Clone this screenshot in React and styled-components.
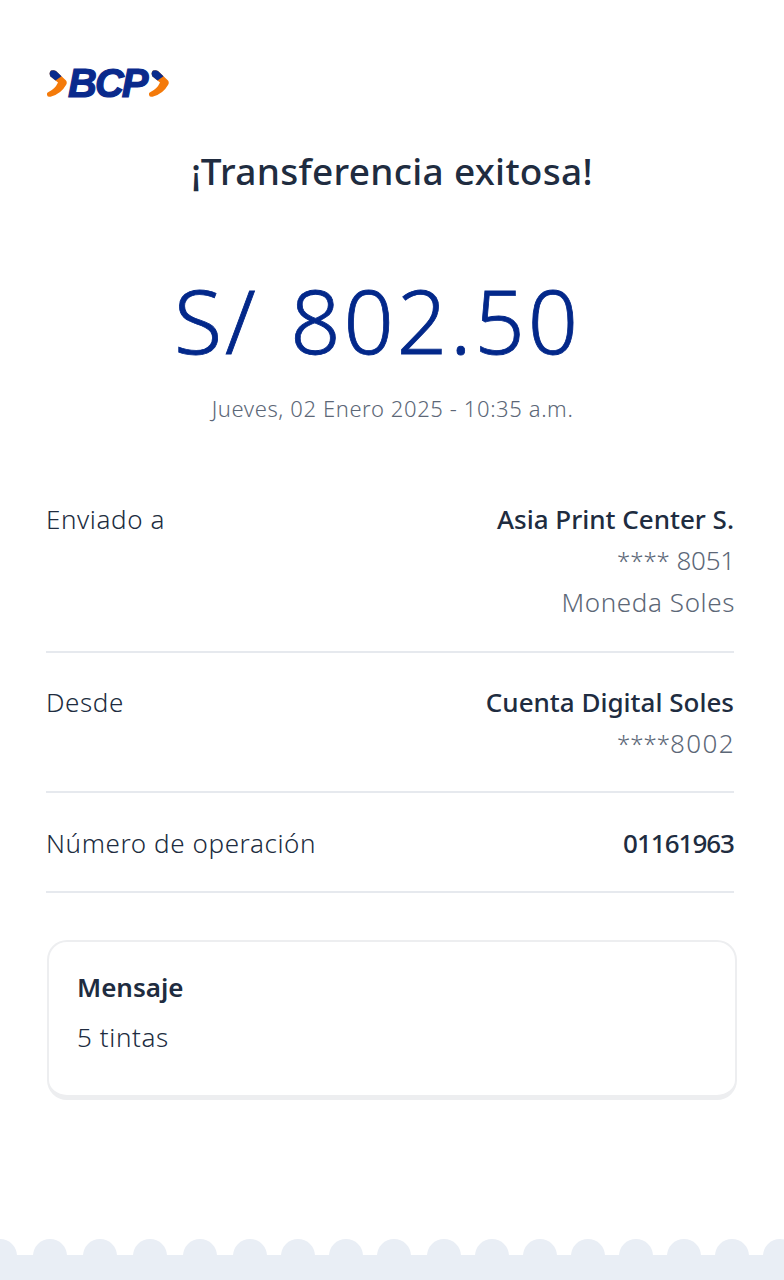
import React from "react";
import styled, { createGlobalStyle } from "styled-components";

const GlobalStyle = createGlobalStyle`
  html, body {
    margin: 0;
    padding: 0;
    background: #fff;
  }
  body {
    font-family: "Noto Sans", "Open Sans", sans-serif;
    color: #202c40;
  }
`;

const Page = styled.div`
  width: 784px;
  height: 1280px;
  display: flex;
  flex-direction: column;
  overflow: hidden;
  background: #fff;
`;

const Main = styled.main`
  flex: 1;
  padding: 65px 50px 0 46px;
`;

const LogoWrap = styled.div`
  display: flex;
  align-items: center;
  height: 36px;
  padding-left: 1px;
`;

const LogoText = styled.span`
  font-family: "Liberation Sans", sans-serif;
  font-weight: 700;
  font-style: italic;
  font-size: 40px;
  line-height: 36px;
  letter-spacing: -2px;
  color: #0a2a8c;
  -webkit-text-stroke: 1.2px #0a2a8c;
  margin: 0 3px 0 1px;
`;

const Title = styled.h1`
  margin: 45px 0 0 0;
  padding-left: 4px;
  font-size: 37px;
  line-height: 50px;
  font-weight: 500;
  letter-spacing: 0.3px;
  text-align: center;
  color: #202c40;
`;

const Amount = styled.div`
  margin-top: 74px;
  padding-right: 25px;
  font-size: 88px;
  line-height: 100px;
  font-weight: 300;
  letter-spacing: 3px;
  word-spacing: 6px;
  text-align: center;
  color: #03288a;
  -webkit-text-stroke: 0.8px #03288a;
`;

const DateLine = styled.div`
  margin-top: 23px;
  padding-left: 5px;
  font-size: 22px;
  line-height: 30px;
  font-weight: 300;
  letter-spacing: 0.6px;
  text-align: center;
  color: #5c6777;
`;

const Rows = styled.div`
  margin-top: 75px;
`;

const Row = styled.div`
  display: flex;
  justify-content: space-between;
  padding-bottom: ${(p) => p.$pad}px;
  margin-bottom: ${(p) => p.$gap}px;
  border-bottom: 2px solid #e6e9ee;
`;

const Label = styled.div`
  font-size: 26px;
  line-height: 42px;
  font-weight: 300;
  letter-spacing: 0.6px;
  color: #202c40;
`;

const Values = styled.div`
  text-align: right;
`;

const Strong = styled.div`
  font-size: 26px;
  line-height: 42px;
  font-weight: 500;
  letter-spacing: ${(p) => (p.$digits ? "-1px" : "0")};
  color: #202c40;
`;

const Muted = styled.div`
  font-size: 26px;
  line-height: 41.5px;
  font-weight: 300;
  letter-spacing: ${(p) => p.$spacing}px;
  margin-right: -1px;
  color: #5c6777;
`;

const Stars = styled.span`
  font-size: 24px;
  letter-spacing: 0;
`;

const MessageCard = styled.section`
  box-sizing: border-box;
  width: 690px;
  height: 160px;
  margin: 47px 0 0 1px;
  padding: 24px 28px;
  border: 2px solid #edeef0;
  border-bottom-width: 5px;
  border-radius: 20px;
`;

const MessageTitle = styled.div`
  font-size: 26px;
  line-height: 42px;
  font-weight: 600;
`;

const MessageBody = styled(Label)`
  margin-top: 8px;
`;

const Footer = styled.footer`
  flex: none;
  height: 41px;
  display: flex;
  flex-direction: column;
`;

const Bumps = styled.div`
  height: 16px;
  display: flex;
  overflow: hidden;
  margin-left: -17px;
`;

const Bump = styled.span`
  flex: none;
  width: 34px;
  height: 34px;
  margin-right: ${(p) => p.$gap}px;
  border-radius: 50%;
  background: #e9eef5;
`;

const Strip = styled.div`
  flex: 1;
  background: #e9eef5;
`;

const bumpGaps = [16, 16, 16, 16, 16, 14, 14, 14, 16, 14, 14, 14, 14, 14, 14, 14, 14, 14];

function Chevron() {
  return (
    <svg width="20" height="27" viewBox="0 0 20 27">
      <path
        d="M4 .6 Q7 -.4 9 1 L19 10.500 Q20.500 12.500 19 15 Q14 24 3.500 26.800 Q.5 27.200 0 25 L0 23.500 Q0 22.500 1.500 22 Q8 19 11 12.500 L3.500 6.500 Q1.500 3 4 .6Z"
        fill="#f47a0a"
      />
      <path
        d="M4 .6 Q7 -.4 9 1 L14.500 6.200 L8.500 10.500 L3.500 6.500 Q1.500 3 4 .6Z"
        fill="#0a2a8c"
      />
    </svg>
  );
}

export default function App() {
  return (
    <Page>
      <GlobalStyle />
      <Main>
        <LogoWrap>
          <Chevron />
          <LogoText>BCP</LogoText>
          <Chevron />
        </LogoWrap>
        <Title>¡Transferencia exitosa!</Title>
        <Amount>S/ 802.50</Amount>
        <DateLine>Jueves, 02 Enero 2025 - 10:35 a.m.</DateLine>
        <Rows>
          <Row $pad={28} $gap={28}>
            <Label>Enviado a</Label>
            <Values>
              <Strong>Asia Print Center S.</Strong>
              <Muted $spacing={-0.2}>
                <Stars>****</Stars> 8051
              </Muted>
              <Muted $spacing={0.6}>Moneda Soles</Muted>
            </Values>
          </Row>
          <Row $pad={26.5} $gap={29}>
            <Label>Desde</Label>
            <Values>
              <Strong>Cuenta Digital Soles</Strong>
              <Muted $spacing={1.4}>
                <Stars>****</Stars>8002
              </Muted>
            </Values>
          </Row>
          <Row $pad={27} $gap={28}>
            <Label>Número de operación</Label>
            <Values>
              <Strong $digits>01161963</Strong>
            </Values>
          </Row>
        </Rows>
        <MessageCard>
          <MessageTitle>Mensaje</MessageTitle>
          <MessageBody>5 tintas</MessageBody>
        </MessageCard>
      </Main>
      <Footer>
        <Bumps>
          {bumpGaps.map((gap, i) => (
            <Bump key={i} $gap={gap} />
          ))}
        </Bumps>
        <Strip />
      </Footer>
    </Page>
  );
}
